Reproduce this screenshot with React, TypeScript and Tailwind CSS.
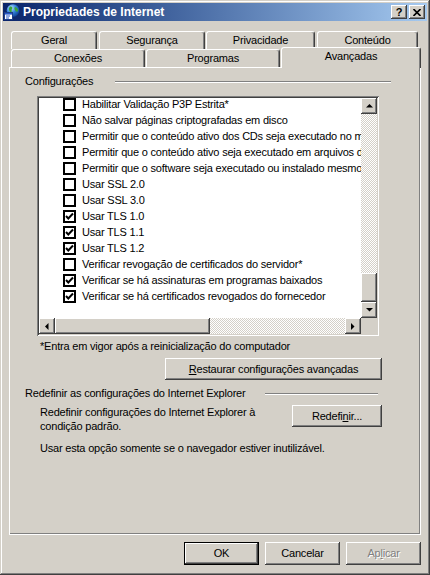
const raised =
  "shadow-[inset_-1px_-1px_0_#404040,inset_1px_1px_0_#ffffff,inset_-2px_-2px_0_#808080]";

const items: [string, boolean][] = [
  ["Habilitar Validação P3P Estrita*", false],
  ["Não salvar páginas criptografadas em disco", false],
  ["Permitir que o conteúdo ativo dos CDs seja executado no meu computador*", false],
  ["Permitir que o conteúdo ativo seja executado em arquivos do Meu Computador*", false],
  ["Permitir que o software seja executado ou instalado mesmo que a assinatura seja inválida", false],
  ["Usar SSL 2.0", false],
  ["Usar SSL 3.0", false],
  ["Usar TLS 1.0", true],
  ["Usar TLS 1.1", true],
  ["Usar TLS 1.2", true],
  ["Verificar revogação de certificados do servidor*", false],
  ["Verificar se há assinaturas em programas baixados", true],
  ["Verificar se há certificados revogados do fornecedor", true],
];

function Arrow({ dir }: { dir: "up" | "down" | "left" | "right" }) {
  const pts = {
    up: "3.5,0 0,3.5 7,3.5",
    down: "0,0 7,0 3.5,3.5",
    left: "3.5,0 3.5,7 0,3.5",
    right: "0,0 0,7 3.5,3.5",
  }[dir];
  const vertical = dir === "up" || dir === "down";
  return (
    <svg width={vertical ? 7 : 4} height={vertical ? 4 : 7} viewBox={vertical ? "0 0 7 4" : "0 0 4 7"}>
      <polygon points={pts} fill="#000" />
    </svg>
  );
}

function ScrollBtn({ dir }: { dir: "up" | "down" | "left" | "right" }) {
  return (
    <div className={`w-[16px] h-[16px] shrink-0 bg-[#d4d0c8] flex items-center justify-center ${raised}`}>
      <Arrow dir={dir} />
    </div>
  );
}

const checker = "[background:repeating-conic-gradient(#ffffff_0_25%,#d4d0c8_0_50%)_0_0/2px_2px]";

function Check({ on }: { on: boolean }) {
  return (
    <div className="w-[13px] h-[13px] shrink-0 border-2 border-black bg-white flex items-center justify-center">
      {on && (
        <svg width="9" height="9" viewBox="0 0 9 9">
          <polyline points="1,4 3.3,6.5 8,1.5" fill="none" stroke="#000" strokeWidth="2" />
        </svg>
      )}
    </div>
  );
}

function Button({ children, w, def, disabled }: { children: React.ReactNode; w: string; def?: boolean; disabled?: boolean }) {
  return (
    <div
      className={`${w} h-[23px] flex items-center justify-center bg-[#d4d0c8] ${
        def
          ? "border border-black shadow-[inset_-1px_-1px_0_#404040,inset_1px_1px_0_#ffffff,inset_-2px_-2px_0_#808080]"
          : raised
      } ${disabled ? "text-[#808080] [text-shadow:1px_1px_0_#ffffff]" : "text-black"}`}
    >
      {children}
    </div>
  );
}

function Tab({ label, cls, selected }: { label: string; cls: string; selected?: boolean }) {
  return (
    <div
      className={`${cls} shrink-0 flex items-center justify-center bg-[#d4d0c8] border-t border-l border-white border-r border-r-[#404040] rounded-t-[3px] shadow-[inset_-1px_0_0_#808080] ${
        selected ? "h-[21px] -mb-[1px] relative z-10 pb-[3px]" : "h-[18px]"
      }`}
    >
      {label}
    </div>
  );
}

function GlobeIcon() {
  return (
    <svg width="16" height="16" viewBox="0 0 16 16">
      <defs>
        <radialGradient id="g" cx="0.35" cy="0.3" r="0.8">
          <stop offset="0" stopColor="#bfe6ff" />
          <stop offset="0.5" stopColor="#2f7fd8" />
          <stop offset="1" stopColor="#0b3a8c" />
        </radialGradient>
      </defs>
      <circle cx="9" cy="6.5" r="6.3" fill="url(#g)" />
      <path d="M6 2.5 C8 2 9 3.5 8 5 C7 6 8.5 7.5 7 8.5 C5.5 8 4.5 6 5 4 Z" fill="#3aa33a" />
      <path d="M11 3 C13 3.5 14.5 5 14 7 C13 8.5 11.5 7.5 11 6 C10.5 5 10 4 11 3 Z" fill="#3aa33a" />
      <rect x="0.5" y="8.5" width="8" height="7" fill="#ffffff" stroke="#1d3f8a" />
      <rect x="1" y="9" width="7" height="1.6" fill="#2456c8" />
      <rect x="2" y="11.5" width="4" height="1" fill="#2456c8" />
      <rect x="2" y="13.5" width="3" height="1" fill="#2456c8" />
    </svg>
  );
}

export default function App() {
  return (
    <div className="w-[430px] h-[575px] bg-[#d4d0c8] p-[3px] flex flex-col text-[11px] tracking-[-0.2px] text-black font-['Liberation_Sans',Arial,sans-serif] shadow-[inset_-1px_-1px_0_#404040,inset_1px_1px_0_#d4d0c8,inset_-2px_-2px_0_#808080,inset_2px_2px_0_#ffffff]">
      {/* title bar */}
      <div className="h-[18px] shrink-0 flex items-center bg-linear-to-r from-[#0a246a] to-[#a6caf0] pl-[1px] pr-[2px]">
        <GlobeIcon />
        <span className="ml-[3px] text-white font-bold text-[12px] tracking-normal">Propriedades de Internet</span>
        <div className="ml-auto flex gap-[2px]">
          <div className={`w-[16px] h-[14px] bg-[#d4d0c8] flex items-center justify-center font-bold text-[11px] leading-none ${raised}`}>
            ?
          </div>
          <div className={`w-[16px] h-[14px] bg-[#d4d0c8] flex items-center justify-center ${raised}`}>
            <svg width="8" height="7" viewBox="0 0 8 7">
              <path d="M0.5 0 L7.5 7 M7.5 0 L0.5 7" stroke="#000" strokeWidth="1.6" />
            </svg>
          </div>
        </div>
      </div>

      <div className="flex-1 flex flex-col px-[6px] pt-[10px] pb-[7px]">
        {/* tabs */}
        <div className="flex h-[18px] pl-[2px]">
          <Tab label="Geral" cls="w-[86px]" />
          <Tab label="Segurança" cls="ml-[2px] w-[106px]" />
          <Tab label="Privacidade" cls="ml-[1px] w-[109px]" />
          <Tab label="Conteúdo" cls="ml-[2px] w-[101px]" />
        </div>
        <div className="flex h-[18px] pl-[2px] items-end">
          <Tab label="Conexões" cls="w-[134px]" />
          <Tab label="Programas" cls="ml-[1px] w-[134px]" />
          <Tab label="Avançadas" cls="ml-[1px] w-[140px]" selected />
        </div>

        {/* panel */}
        <div className="h-[468px] shrink-0 flex flex-col border-t border-l border-white border-r border-b border-[#404040] border-t-white border-l-white shadow-[inset_-1px_-1px_0_#808080]">
          <div className="mt-[7px] ml-[15px] w-[366px] flex items-center leading-[13px]">
            <span>Configurações</span>
            <div className="ml-auto w-[276px] h-[2px] border-t border-[#808080] border-b border-b-white" />
          </div>

          {/* list */}
          <div className="mt-[8px] ml-[27px] w-[342px] h-[240px] p-[2px] bg-white flex flex-col shadow-[inset_1px_1px_0_#808080,inset_-1px_-1px_0_#ffffff,inset_2px_2px_0_#404040,inset_-2px_-2px_0_#d4d0c8]">
            <div className="flex flex-1 min-h-0">
              <div className="flex-1 overflow-hidden whitespace-nowrap">
                {items.map(([t, on]) => (
                  <div key={t} className="h-[16px] flex items-start pl-[24px]">
                    <Check on={on} />
                    <span className="ml-[6px] leading-[13px]">{t}</span>
                  </div>
                ))}
              </div>
              <div className="w-[16px] flex flex-col">
                <ScrollBtn dir="up" />
                <div className={`flex-1 ${checker}`} />
                <div className={`h-[29px] bg-[#d4d0c8] ${raised}`} />
                <ScrollBtn dir="down" />
              </div>
            </div>
            <div className="h-[16px] flex">
              <ScrollBtn dir="left" />
              <div className={`w-[155px] bg-[#d4d0c8] ${raised}`} />
              <div className={`flex-1 ${checker}`} />
              <ScrollBtn dir="right" />
              <div className="w-[16px] bg-[#d4d0c8]" />
            </div>
          </div>

          <div className="mt-[4px] ml-[30px] leading-[13px]">*Entra em vigor após a reinicialização do computador</div>

          <div className="mt-[5px] ml-[155px] w-[217px] h-[22px]">
            <div className={`w-full h-full bg-[#d4d0c8] flex items-center justify-center ${raised}`}>
              <span>
                <span className="underline">R</span>estaurar configurações avançadas
              </span>
            </div>
          </div>

          <div className="mt-[7px] ml-[15px] w-[353px] flex items-center leading-[13px]">
            <span>Redefinir as configurações do Internet Explorer</span>
            <div className="ml-auto w-[113px] h-[2px] border-t border-[#808080] border-b border-b-white" />
          </div>

          <div className="mt-[5px] ml-[30px] w-[342px] flex items-start">
            <div className="leading-[14px] w-[250px]">
              Redefinir configurações do Internet Explorer à
              <br />
              condição padrão.
            </div>
            <div className={`ml-auto w-[90px] h-[22px] bg-[#d4d0c8] flex items-center justify-center ${raised}`}>
              <span>
                Redefi<span className="underline">n</span>ir...
              </span>
            </div>
          </div>

          <div className="mt-[9px] ml-[30px] leading-[13px]">
            Usar esta opção somente se o navegador estiver inutilizável.
          </div>
        </div>

        {/* dialog buttons */}
        <div className="mt-[7px] flex justify-end gap-[6px]">
          <Button w="w-[75px]" def>
            OK
          </Button>
          <Button w="w-[75px]">Cancelar</Button>
          <Button w="w-[75px]" disabled>
            <span>
              Ap<span className="underline">l</span>icar
            </span>
          </Button>
        </div>
      </div>
    </div>
  );
}
